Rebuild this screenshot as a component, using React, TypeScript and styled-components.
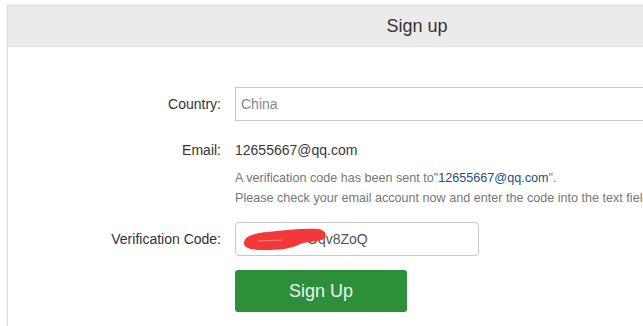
import * as React from "react";
import styled, { createGlobalStyle } from "styled-components";

const GlobalStyle = createGlobalStyle`
  html, body {
    margin: 0;
    padding: 0;
    background: #fff;
    overflow: hidden;
  }
  body {
    font-family: "Liberation Sans", Arial, sans-serif;
    color: #333;
  }
`;

const Page = styled.div`
  padding: 5px 0 0 7px;
  width: 900px;
`;

const Panel = styled.div`
  width: 818px;
  height: 360px;
  border: 1px solid #dcdcdc;
  box-shadow: 0 0 3px rgba(0, 0, 0, 0.12);
  background: #fff;
`;

const PanelHeader = styled.div`
  height: 40px;
  background: #ebebeb;
  border-bottom: 1px solid #e2e2e2;
  display: flex;
  align-items: center;
  justify-content: center;
  font-size: 18px;
  color: #333;
`;

const Form = styled.div`
  padding-top: 40px;
  display: grid;
  grid-template-columns: 213px 1fr;
  column-gap: 14px;
  align-items: center;
`;

const Label = styled.div<{ $top?: number }>`
  text-align: right;
  font-size: 14px;
  color: #333;
  margin-top: ${(p) => p.$top ?? 0}px;
`;

const Cell = styled.div<{ $top?: number }>`
  margin-top: ${(p) => p.$top ?? 0}px;
`;

const TextInput = styled.div<{ $width?: string; $rounded?: boolean; $color?: string }>`
  box-sizing: border-box;
  height: 34px;
  width: ${(p) => p.$width ?? "100%"};
  border: 1px solid #c8c8c8;
  border-radius: ${(p) => (p.$rounded ? "4px" : "0")};
  padding: 0 5px;
  display: flex;
  align-items: center;
  font-size: 14px;
  color: ${(p) => p.$color ?? "#888"};
  position: relative;
  background: #fff;
`;

const StaticValue = styled.div`
  font-size: 14px;
  color: #3a3a3a;
  line-height: 20px;
`;

const Help = styled.div`
  grid-column: 2;
  margin-top: 8px;
  font-size: 12.6px;
  line-height: 20px;
  color: #777;
  white-space: nowrap;
`;

const MailLink = styled.span`
  color: #24507a;
`;

const Redaction = styled.svg`
  position: absolute;
  left: 6px;
  top: 4px;
`;

const CodeText = styled.span`
  padding-left: 66px;
`;

const SignUpButton = styled.button`
  grid-column: 2;
  margin-top: 14px;
  width: 172px;
  height: 42px;
  border: none;
  border-radius: 3px;
  background: #2e8f3b;
  color: #eaf5ea;
  font-family: "Liberation Sans", Arial, sans-serif;
  font-size: 18px;
  cursor: pointer;
`;

export default function App() {
  return (
    <Page>
      <GlobalStyle />
      <Panel>
        <PanelHeader>Sign up</PanelHeader>
        <Form>
          <Label>Country:</Label>
          <Cell>
            <TextInput>China</TextInput>
          </Cell>

          <Label $top={19}>Email:</Label>
          <Cell $top={19}>
            <StaticValue>12655667@qq.com</StaticValue>
          </Cell>
          <Help>
            A verification code has been sent to"<MailLink>12655667@qq.com</MailLink>".
            <br />
            Please check your email account now and enter the code into the text field below.
          </Help>

          <Label $top={14}>Verification Code:</Label>
          <Cell $top={14}>
            <TextInput $width="244px" $rounded $color="#555">
              <Redaction width="86" height="24" viewBox="0 0 86 24">
                <path
                  d="M2 16 C 2 9, 12 6, 26 5 C 44 3, 62 1, 76 2 C 85 3, 86 10, 80 13 C 72 15, 64 15, 58 17 C 50 22, 36 23, 22 23 C 8 23, 2 21, 2 16 Z"
                  fill="#f23838"
                />
                <path d="M16 14 L 40 13" stroke="#f58d8d" strokeWidth="1" />
              </Redaction>
              <CodeText>Oqv8ZoQ</CodeText>
            </TextInput>
          </Cell>

          <SignUpButton>Sign Up</SignUpButton>
        </Form>
      </Panel>
    </Page>
  );
}
